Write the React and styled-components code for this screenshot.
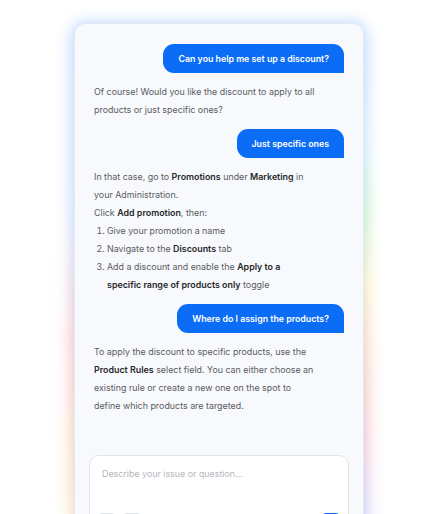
import React from "react";
import styled, { createGlobalStyle } from "styled-components";

const Global = createGlobalStyle`
  html, body { margin: 0; padding: 0; background: #ffffff; overflow: hidden; height: 514px; }
  body { font-family: Inter, "Noto Sans", Roboto, sans-serif; -webkit-font-smoothing: antialiased; }
  * { box-sizing: border-box; }
`;

const Stage = styled.div`
  display: flex;
  justify-content: center;
  padding-top: 23px;
`;

const CardWrap = styled.div`
  position: relative;
  width: 290px;
  isolation: isolate;
  &::before {
    content: "";
    position: absolute;
    inset: 2px -2px -2px -2px;
    z-index: -1;
    border-radius: 14px;
    background:
      linear-gradient(to bottom, #b9d6ff 0%, #c5dcff 35%, #ffb3b3 62%, #ffd8a0 88%, #ffe7a8 100%) left / 50% 100% no-repeat,
      linear-gradient(to bottom, #b9d6ff 0%, #c8e6ff 22%, #aef0b8 35%, #ffe9a0 50%, #ffc8a0 62%, #ffb0b8 78%, #c8c8ff 95%) right / 50% 100% no-repeat;
    filter: blur(9px);
    opacity: 0.9;
  }
`;

const Card = styled.div`
  height: 520px;
  background: #f8f9fc;
  border: 1px solid #e4e9f2;
  border-radius: 11px;
  display: flex;
  flex-direction: column;
  overflow: hidden;
  box-shadow: 0 -2px 10px rgba(150, 190, 255, 0.25);
`;

const Messages = styled.div`
  display: flex;
  flex-direction: column;
  gap: 10px;
  padding: 20px 19px 25px 19px;
`;

const Bubble = styled.div`
  align-self: flex-end;
  background: #0b6cf6;
  color: #ffffff;
  font-size: 8.8px;
  font-weight: 600;
  line-height: 13px;
  padding: 8px 15px;
  border-radius: 11px 11px 0 11px;
`;

const Reply = styled.div`
  color: #585b61;
  font-size: 8.9px;
  line-height: 18px;
  b {
    color: #25272b;
    font-weight: 600;
  }
`;

const Steps = styled.ol`
  margin: 0;
  padding-left: 13px;
  li::marker { color: #585b61; }
`;

const Footer = styled.div`
  padding: 15px 14px 0 14px;
  margin-top: auto;
  flex: 1;
  display: flex;
  flex-direction: column;
`;

const InputBox = styled.div`
  background: #ffffff;
  border: 1px solid #e2e5ea;
  border-radius: 10px;
  padding: 11px 7px 8px 7px;
  display: flex;
  flex-direction: column;
  gap: 12px;
`;

const Placeholder = styled.div`
  color: #b4b7bd;
  font-size: 8.9px;
  line-height: 14px;
  padding: 0 5px;
  height: 34px;
`;

const Toolbar = styled.div`
  display: flex;
  align-items: center;
  gap: 5px;
`;

const ToolButton = styled.div`
  width: 20px;
  height: 20px;
  border-radius: 5px;
  border: 1px solid ${(p) => (p.$primary ? "#0b6cf6" : "#dfe2e7")};
  background: ${(p) => (p.$primary ? "#0b6cf6" : "#ffffff")};
  margin-left: ${(p) => (p.$primary ? "auto" : "0")};
`;

export default function App() {
  return (
    <>
      <Global />
      <Stage>
        <CardWrap>
          <Card>
            <Messages>
              <Bubble>Can you help me set up a discount?</Bubble>
              <Reply>
                Of course! Would you like the discount to apply to all
                <br />
                products or just specific ones?
              </Reply>
              <Bubble>Just specific ones</Bubble>
              <Reply>
                In that case, go to <b>Promotions</b> under <b>Marketing</b> in
                <br />
                your Administration.
                <br />
                Click <b>Add promotion</b>, then:
                <Steps>
                  <li>Give your promotion a name</li>
                  <li>
                    Navigate to the <b>Discounts</b> tab
                  </li>
                  <li>
                    Add a discount and enable the <b>Apply to a</b>
                    <br />
                    <b>specific range of products only</b> toggle
                  </li>
                </Steps>
              </Reply>
              <Bubble>Where do I assign the products?</Bubble>
              <Reply>
                To apply the discount to specific products, use the
                <br />
                <b>Product Rules</b> select field. You can either choose an
                <br />
                existing rule or create a new one on the spot to
                <br />
                define which products are targeted.
              </Reply>
            </Messages>
            <Footer>
              <InputBox>
                <Placeholder>Describe your issue or question...</Placeholder>
                <Toolbar>
                  <ToolButton />
                  <ToolButton />
                  <ToolButton $primary />
                </Toolbar>
              </InputBox>
            </Footer>
          </Card>
        </CardWrap>
      </Stage>
    </>
  );
}
